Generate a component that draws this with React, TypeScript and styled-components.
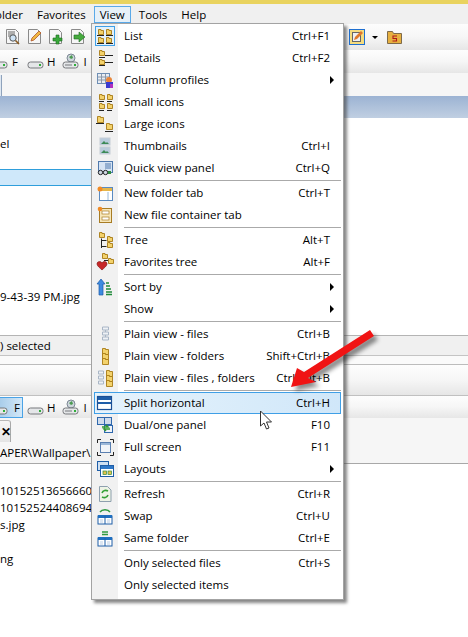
import React from 'react';
import styled, { createGlobalStyle } from 'styled-components';

const GlobalStyle = createGlobalStyle`
  html, body { margin: 0; padding: 0; background: #fff; }
  body { font-family: 'Open Sans', 'Liberation Sans', sans-serif; font-size: 11.5px; color: #000; }
`;

const Screen = styled.div`
  position: relative;
  width: 468px;
  height: 637px;
  overflow: hidden;
  background: #fff;
`;

const TitleStrip = styled.div`
  height: 4px;
  background: #e9d35f;
`;

const MenuBar = styled.div`
  height: 20px;
  background: #f0f0f0;
  display: flex;
  align-items: center;
  gap: 2px;
`;

const MenuBarItem = styled.div<{ $open?: boolean; $clipped?: boolean }>`
  height: 17px;
  line-height: 15px;
  padding: 0 5px;
  margin-left: ${(p) => (p.$clipped ? '-11px' : '0')};
  box-sizing: border-box;
  border: 1px solid ${(p) => (p.$open ? '#5aa9e8' : 'transparent')};
  background: ${(p) => (p.$open ? '#e6f0f8' : 'transparent')};
`;

const ToolBar = styled.div<{ $h: number }>`
  height: ${(p) => p.$h}px;
  box-sizing: border-box;
  background: linear-gradient(to bottom, #fdfdfd 0%, #f6f6f6 50%, #e6e6e6 100%);
  display: flex;
  align-items: center;
`;

const ToolSlot = styled.div<{ $x: number }>`
  margin-left: ${(p) => p.$x}px;
  display: flex;
  align-items: center;
  height: 16px;
`;

const DriveLetter = styled.span<{ $x: number }>`
  margin-left: ${(p) => p.$x}px;
`;

const DriveActive = styled.div`
  width: 23px;
  height: 21px;
  flex: none;
  box-sizing: border-box;
  border: 1px solid #4aa3e6;
  border-left: none;
  background: linear-gradient(to right, #a9cdea, #d3e8f8);
  display: flex;
  align-items: center;
  overflow: hidden;
  margin-right: -1px;
`;

const TabStrip = styled.div<{ $h: number }>`
  height: ${(p) => p.$h}px;
  box-sizing: border-box;
  padding-top: 2px;
  background: #f6f6f6;
`;

const UpperTab = styled.div`
  width: 2px;
  height: 21px;
  box-sizing: border-box;
  background: #dfe8f2;
  border-right: 1px solid #8fa3bc;
`;

const LowerTab = styled.div`
  width: 11px;
  height: 22px;
  box-sizing: border-box;
  background: linear-gradient(to bottom, #f7f7f7, #e4e4e4);
  border-right: 1px solid #a8a8a8;
  border-top: 1px solid #b8b8b8;
  border-top-right-radius: 3px;
  display: flex;
  align-items: center;
  font-size: 12px;
  font-weight: 700;
  padding-left: 1px;
`;

const BlueHeader = styled.div`
  height: 22px;
  background: linear-gradient(to bottom, #9cb3d3, #c0cfe2);
`;

const FileList = styled.div<{ $h: number; $top: number }>`
  height: ${(p) => p.$h}px;
  box-sizing: border-box;
  padding-top: ${(p) => p.$top}px;
  overflow: hidden;
  background: #fff;
`;

const FileRow = styled.div<{ $selected?: boolean }>`
  height: 17px;
  line-height: 17px;
  white-space: nowrap;
  box-sizing: border-box;
  ${(p) =>
    p.$selected
      ? 'background: #cfe8fa; border: 1px solid #2f9edb; border-left: none; width: 92px;'
      : ''}
`;

const StatusBar = styled.div`
  height: 20px;
  line-height: 20px;
  box-sizing: border-box;
  border-top: 1px solid #b4b4b4;
  background: #f0f0f0;
`;

const StatusGap = styled.div`
  height: 10px;
  box-sizing: border-box;
  border-top: 1px solid #c4c4c4;
  border-bottom: 1px solid #bcbcbc;
  background: #fafafa;
`;

const PathBar = styled.div`
  height: 22px;
  line-height: 22px;
  box-sizing: border-box;
  background: #f6f6f6;
  border-bottom: 1px solid #a8a8a8;
  white-space: nowrap;
  overflow: hidden;
`;

const Rule = styled.div`
  height: 1px;
  background: #c0c0c0;
`;

const Menu = styled.div`
  position: absolute;
  left: 91px;
  top: 23px;
  width: 253px;
  height: 577px;
  box-sizing: border-box;
  padding: 1px 0 3px;
  border: 1px solid #a3a3a3;
  background: linear-gradient(to right, #f1f1f1 26px, #fff 26px);
  box-shadow: 3px 3px 3px rgba(70, 70, 70, 0.65);
`;

const MenuRow = styled.div<{ $active?: boolean }>`
  height: 22px;
  margin: 0 2px;
  display: flex;
  align-items: center;
  box-sizing: border-box;
  padding: 0 11px 0 1px;
  white-space: nowrap;
  ${(p) =>
    p.$active
      ? 'background: linear-gradient(to right, #e6f3fc, #d0e7f9); outline: 1px solid #3f9fe6; outline-offset: -1px;'
      : ''}
`;

const IconBox = styled.div<{ $checked?: boolean }>`
  width: 20px;
  height: 20px;
  flex: none;
  box-sizing: border-box;
  display: flex;
  align-items: center;
  justify-content: center;
  margin-right: 9px;
  ${(p) => (p.$checked ? 'border: 1px solid #3f9fe6; background: #e2f1fb;' : '')}
`;

const MenuLabel = styled.span`
  flex: 1;
  margin-bottom: 1px;
`;

const Shortcut = styled.span`
  text-align: right;
  margin-bottom: 1px;
`;

const SubArrow = styled.span`
  width: 0;
  height: 0;
  margin-right: -4px;
  border-left: 4px solid #000;
  border-top: 4px solid transparent;
  border-bottom: 4px solid transparent;
`;

const MenuSeparator = styled.div`
  height: 3px;
  margin: 0 2px 0 32px;
  display: flex;
  align-items: center;
  &::after {
    content: '';
    flex: 1;
    height: 1px;
    background: #aaa;
  }
`;

const Overlay = styled.svg<{ $x: number; $y: number; $shadow?: boolean }>`
  position: absolute;
  left: ${(p) => p.$x}px;
  top: ${(p) => p.$y}px;
  pointer-events: none;
  ${(p) => (p.$shadow ? 'filter: drop-shadow(4px 4px 2px rgba(0, 0, 0, 0.45));' : '')}
`;

const GOLD = '#f3d26c';
const EDGE = '#a87a14';

const Fold = ({ x, y, s = 5 }: { x: number; y: number; s?: number }) => (
  <path
    d={`M${x + 0.5} ${y + 0.5}h${s / 2}v1h${s / 2}v${s - 1}h-${s}z`}
    fill={GOLD}
    stroke={EDGE}
    strokeWidth="0.9"
  />
);

const Line = ({ x, y, w, c = '#222' }: { x: number; y: number; w: number; c?: string }) => (
  <rect x={x} y={y} width={w} height="1" fill={c} />
);

const Svg = ({ children, size = 18 }: { children: React.ReactNode; size?: number }) => (
  <svg width={size} height={size} viewBox="0 0 18 18">
    {children}
  </svg>
);

const PaneTiles = () => (
  <>
    <rect x="2" y="9" width="14" height="8" fill="#fff" stroke="#1f5fa8" />
    <rect x="2" y="8" width="14" height="3" fill="#1f6fc0" />
    <rect x="8.5" y="9" width="1" height="8" fill="#1f5fa8" />
    <rect x="4" y="12" width="3" height="4" fill="#dce6f2" />
    <rect x="11" y="12" width="3" height="4" fill="#dce6f2" />
  </>
);

const icons: Record<string, React.ReactNode> = {
  list: (
    <Svg>
      <Fold x={2} y={2} />
      <Fold x={10} y={2} />
      <Fold x={2} y={10} />
      <Fold x={10} y={10} />
      <Line x={1} y={8} w={7} />
      <Line x={10} y={8} w={7} />
      <Line x={1} y={16} w={7} />
      <Line x={10} y={16} w={7} />
    </Svg>
  ),
  details: (
    <Svg>
      <Fold x={3} y={1} />
      <Fold x={3} y={10} />
      <Line x={3} y={8} w={6} />
      <Line x={9} y={6} w={8} />
      <Line x={9} y={13} w={8} />
      <Line x={3} y={16} w={6} />
    </Svg>
  ),
  columns: (
    <Svg>
      <rect x="1.5" y="2.5" width="12" height="10" fill="#e8edf4" stroke="#6f8fb4" />
      <path d="M5.5 3v9M9.5 3v9M2 6h11M2 9h11" stroke="#8b98a8" />
      <circle cx="13" cy="9" r="3" fill="#e8863a" />
      <rect x="10" y="11" width="7" height="6" fill="#3b3ad0" />
      <rect x="14" y="13" width="3" height="4" fill="#b030c0" />
    </Svg>
  ),
  small: (
    <Svg>
      <Fold x={3} y={1} />
      <Fold x={11} y={1} />
      <Line x={3} y={8} w={5} />
      <Line x={11} y={8} w={5} />
      <Fold x={3} y={10} />
      <Fold x={11} y={10} />
      <Line x={3} y={17} w={5} />
      <Line x={11} y={17} w={5} />
    </Svg>
  ),
  large: (
    <Svg>
      <Fold x={1} y={1} s={6} />
      <Line x={0} y={8} w={8} />
      <Fold x={10} y={8} s={6} />
      <Line x={9} y={16} w={8} />
    </Svg>
  ),
  thumbs: (
    <Svg>
      <rect x="4" y="1" width="10" height="7" fill="#b9cbdc" stroke="#c6ced6" />
      <path d="M5 7l3-3 2 2 1-1 2 2z" fill="#3c8a56" />
      <rect x="4" y="10" width="10" height="7" fill="#b9cbdc" stroke="#c6ced6" />
      <path d="M5 16l3-3 2 2 1-1 2 2z" fill="#3c8a56" />
    </Svg>
  ),
  quick: (
    <Svg>
      <rect x="2.5" y="2.5" width="14" height="11" fill="#d6e4f4" stroke="#4f79ad" />
      <path d="M9 5h6M9 7h6M9 9h6" stroke="#4f79ad" />
      <circle cx="4.5" cy="13.5" r="2.2" fill="#d0d8e2" stroke="#222" />
      <circle cx="9.5" cy="13.5" r="2.2" fill="#d0d8e2" stroke="#222" />
      <path d="M12 12h3v3h-3z" fill="#2f8a3c" />
    </Svg>
  ),
  newTab: (
    <Svg>
      <rect x="3.5" y="3.5" width="13" height="13" fill="#fff" stroke="#5a8ac0" />
      <rect x="4" y="4" width="12" height="3" fill="#e6b64a" />
      <path d="M12 8v8" stroke="#9ab8d8" />
      <circle cx="4" cy="5" r="2.5" fill="#f08a24" />
    </Svg>
  ),
  newFile: (
    <Svg>
      <rect x="3.5" y="2.5" width="12" height="14" fill="#f7e7ba" stroke="#a87c24" />
      <rect x="6" y="5" width="7" height="3" fill="#fff" stroke="#a87c24" strokeWidth="0.7" />
      <rect x="6" y="11" width="7" height="3" fill="#fff" stroke="#a87c24" strokeWidth="0.7" />
      <circle cx="4" cy="3" r="2.3" fill="#f08a24" />
    </Svg>
  ),
  tree: (
    <Svg>
      <Fold x={3} y={1} />
      <Fold x={11} y={5} />
      <Fold x={11} y={11} />
      <path d="M5.5 7.500v9.500M5.500 9.500h5M5.500 15.500h5" stroke="#222" fill="none" />
    </Svg>
  ),
  favTree: (
    <Svg>
      <Fold x={6} y={0} />
      <Fold x={12} y={5} />
      <path d="M8 7.500h4" stroke="#222" />
      <path d="M1 11c0-3 4-3 5-1 1-2 5-2 5 1 0 2-3 4-5 6-2-2-5-4-5-6z" fill="#c62828" stroke="#7c1010" strokeWidth="0.6" />
    </Svg>
  ),
  sort: (
    <Svg>
      <path d="M5 1l4 5H7v11H3V6H1z" fill="#3d8be0" stroke="#1d5aa8" strokeWidth="0.7" />
      <path d="M10 5h3M10 8h4M10 11h5M10 14h6M10 16.500h6" stroke="#1f8a3a" strokeWidth="1.400" />
    </Svg>
  ),
  plainFiles: (
    <Svg>
      <path d="M6.500 2h6v3h-6zM6.500 7h6v3h-6zM6.500 12h6v3h-6z" fill="#eef1f5" stroke="#a9b6c6" />
      <path d="M9.500 5v2M9.500 10v2" stroke="#a9b6c6" />
    </Svg>
  ),
  plainFolders: (
    <Svg>
      <Fold x={6} y={1} s={6} />
      <Fold x={6} y={6} s={6} />
      <Fold x={6} y={11} s={6} />
    </Svg>
  ),
  plainBoth: (
    <Svg>
      <path d="M2.500 2h5v3h-5zM2.500 7h5v3h-5zM2.500 12h5v3h-5z" fill="#eef1f5" stroke="#a9b6c6" />
      <Fold x={10} y={1} s={6} />
      <Fold x={10} y={6} s={6} />
      <Fold x={10} y={11} s={6} />
    </Svg>
  ),
  split: (
    <Svg>
      <rect x="1.500" y="2.500" width="14" height="13" fill="#fff" stroke="#1c4f94" strokeWidth="1.200" />
      <rect x="2" y="3" width="13" height="3" fill="#1f5ea8" />
      <rect x="2" y="8" width="13" height="2" fill="#1f5ea8" />
    </Svg>
  ),
  dual: (
    <Svg>
      <rect x="1.500" y="1.500" width="7" height="7" fill="#cfdcec" stroke="#2f68ad" />
      <rect x="8.500" y="1.500" width="7" height="7" fill="#cfdcec" stroke="#2f68ad" />
      <rect x="8.500" y="9.500" width="8" height="7" fill="#eef3f9" stroke="#2f68ad" />
      <path d="M6 11h6l-2-2M14 13H8l2 2" stroke="#2f9a2f" strokeWidth="1.500" fill="none" />
    </Svg>
  ),
  full: (
    <Svg>
      <rect x="4.500" y="4.500" width="10" height="10" fill="#f1f4f8" stroke="#5a7fb0" />
      <rect x="5" y="5" width="9" height="2" fill="#9cb8d8" />
      <path d="M1.500 5V1.500H5M14 1.500h3.500V5M17.500 14v3.500H14M5 17.500H1.500V14" stroke="#222" fill="none" />
    </Svg>
  ),
  layouts: (
    <Svg>
      <rect x="1.500" y="1.500" width="11" height="9" fill="#cfe0f2" stroke="#1f5ea8" />
      <rect x="4.500" y="5.500" width="13" height="11" fill="#fff" stroke="#1f5ea8" />
      <rect x="5" y="6" width="12" height="3" fill="#2f78c8" />
      <rect x="7" y="11" width="3.500" height="3.500" fill="#e6c24a" stroke="#2c8a3c" strokeWidth="0.7" />
      <rect x="12" y="11" width="3.500" height="3.500" fill="#e6c24a" stroke="#2c8a3c" strokeWidth="0.7" />
    </Svg>
  ),
  refresh: (
    <Svg>
      <path d="M3.500 1.500h8l3.500 3.500v11.500h-11.500z" fill="#eef3e6" stroke="#8ea0ae" />
      <path d="M6 8c1-3 4-3 6-2M12 10c-1 3-4 3-6 2" stroke="#35a035" strokeWidth="1.600" fill="none" />
    </Svg>
  ),
  swap: (
    <Svg>
      <PaneTiles />
      <path d="M4 5c2-3 8-3 10 0" stroke="#2f9a3f" strokeWidth="1.400" fill="none" />
    </Svg>
  ),
  same: (
    <Svg>
      <PaneTiles />
      <path d="M6 3h6M6 5.500h6" stroke="#2f9a3f" strokeWidth="1.400" />
    </Svg>
  ),
};

const DiskIcon = ({ net }: { net?: boolean }) => (
  <svg width="17" height="17" viewBox="0 0 17 17">
    {net && <circle cx="9" cy="5" r="4" fill="#cfd6dc" stroke="#7c8894" />}
    {net && <path d="M7 4l3-2 1 3-2 1z" fill="#4b9a52" />}
    <rect x="1" y="9" width="15" height="6" rx="2.500" fill="#e4e6e8" stroke="#77797c" />
    <rect x="12" y="11" width="2" height="2" fill="#2fae3a" />
    {net && <path d="M3 12h7" stroke="#77797c" />}
  </svg>
);

const ToolDoc = ({ kind }: { kind: 'search' | 'pencil' | 'plus' | 'go' }) => (
  <svg width="16" height="16" viewBox="0 0 16 16">
    <path d="M1.500 .5h9l3 3v11h-12z" fill="#f6f6f6" stroke="#8a8a8a" />
    {kind === 'search' && (
      <>
        <path d="M3 3h7M3 5h7M3 7h7" stroke="#666" />
        <circle cx="8" cy="9" r="3.200" fill="#cfe4f6" stroke="#555" />
        <path d="M10.500 11.500l3.500 3.500" stroke="#8a5a20" strokeWidth="1.600" />
      </>
    )}
    {kind === 'pencil' && <path d="M4 12l1-3 7-7 2 2-7 7z" fill="#f0b840" stroke="#b0562a" strokeWidth="0.8" />}
    {kind === 'plus' && <path d="M8 6h3v3h3v3h-3v3H8v-3H5V9h3z" fill="#38a83a" stroke="#1d6a20" strokeWidth="0.6" />}
    {kind === 'go' && <path d="M4 6h5V3l6 5-6 5v-3H4z" fill="#46aa3e" stroke="#1d6a20" strokeWidth="0.6" />}
  </svg>
);

const NoteTool = () => (
  <svg width="16" height="16" viewBox="0 0 16 16">
    <rect x=".5" y=".5" width="15" height="15" fill="#f6dc7e" stroke="#1f6fd0" />
    <rect x="3.500" y="3.500" width="8" height="9" fill="#eef0f2" stroke="#666" />
    <path d="M5 11l1-3 6-6 2 2-6 6z" fill="#e0792c" />
  </svg>
);

const Caret = styled.span`
  width: 0;
  height: 0;
  margin-left: 7px;
  border-top: 3px solid #000;
  border-left: 3px solid transparent;
  border-right: 3px solid transparent;
`;

const FolderS = () => (
  <svg width="15" height="14" viewBox="0 0 15 14">
    <path d="M.5 1.500h5l1 2h8v10h-14z" fill="#e6b040" stroke="#7e6a4a" />
    <path d="M10 6H6v2.500h3.500V11H5.500" stroke="#b01818" strokeWidth="1.100" fill="none" />
  </svg>
);

type Item =
  | { sep: true }
  | { sep?: false; icon?: string; label: string; key2?: string; sub?: boolean; checked?: boolean; active?: boolean };

const menuItems: Item[] = [
  { icon: 'list', label: 'List', key2: 'Ctrl+F1', checked: true },
  { icon: 'details', label: 'Details', key2: 'Ctrl+F2' },
  { icon: 'columns', label: 'Column profiles', sub: true },
  { icon: 'small', label: 'Small icons' },
  { icon: 'large', label: 'Large icons' },
  { icon: 'thumbs', label: 'Thumbnails', key2: 'Ctrl+I' },
  { icon: 'quick', label: 'Quick view panel', key2: 'Ctrl+Q' },
  { sep: true },
  { icon: 'newTab', label: 'New folder tab', key2: 'Ctrl+T' },
  { icon: 'newFile', label: 'New file container tab' },
  { sep: true },
  { icon: 'tree', label: 'Tree', key2: 'Alt+T' },
  { icon: 'favTree', label: 'Favorites tree', key2: 'Alt+F' },
  { sep: true },
  { icon: 'sort', label: 'Sort by', sub: true },
  { label: 'Show', sub: true },
  { sep: true },
  { icon: 'plainFiles', label: 'Plain view - files', key2: 'Ctrl+B' },
  { icon: 'plainFolders', label: 'Plain view - folders', key2: 'Shift+Ctrl+B' },
  { icon: 'plainBoth', label: 'Plain view - files , folders', key2: 'Ctrl+Alt+B' },
  { sep: true },
  { icon: 'split', label: 'Split horizontal', key2: 'Ctrl+H', active: true },
  { icon: 'dual', label: 'Dual/one panel', key2: 'F10' },
  { icon: 'full', label: 'Full screen', key2: 'F11' },
  { icon: 'layouts', label: 'Layouts', sub: true },
  { sep: true },
  { icon: 'refresh', label: 'Refresh', key2: 'Ctrl+R' },
  { icon: 'swap', label: 'Swap', key2: 'Ctrl+U' },
  { icon: 'same', label: 'Same folder', key2: 'Ctrl+E' },
  { sep: true },
  { label: 'Only selected files', key2: 'Ctrl+S' },
  { label: 'Only selected items' },
];

const upperRows = ['', 'el', '', '#', '', '', '', '', '', '', '9-43-39 PM.jpg'];
const lowerRows = ['10152513656660', '10152524408694', 's.jpg', '', 'ng'];

const App: React.FC = () => (
  <Screen>
    <GlobalStyle />
    <TitleStrip />
    <MenuBar>
      <MenuBarItem $clipped>older</MenuBarItem>
      <MenuBarItem>Favorites</MenuBarItem>
      <MenuBarItem $open>View</MenuBarItem>
      <MenuBarItem>Tools</MenuBarItem>
      <MenuBarItem>Help</MenuBarItem>
    </MenuBar>
    <ToolBar $h={26}>
      <ToolSlot $x={5}><ToolDoc kind="search" /></ToolSlot>
      <ToolSlot $x={6}><ToolDoc kind="pencil" /></ToolSlot>
      <ToolSlot $x={5}><ToolDoc kind="plus" /></ToolSlot>
      <ToolSlot $x={6}><ToolDoc kind="go" /></ToolSlot>
      <ToolSlot $x={263}><NoteTool /></ToolSlot>
      <Caret />
      <ToolSlot $x={9}><FolderS /></ToolSlot>
    </ToolBar>
    <ToolBar $h={23}>
      <ToolSlot $x={-9}><DiskIcon /></ToolSlot>
      <DriveLetter $x={4}>F</DriveLetter>
      <ToolSlot $x={9}><DiskIcon /></ToolSlot>
      <DriveLetter $x={3}>H</DriveLetter>
      <ToolSlot $x={7}><DiskIcon net /></ToolSlot>
      <DriveLetter $x={4}>I</DriveLetter>
    </ToolBar>
    <TabStrip $h={23}><UpperTab /></TabStrip>
    <BlueHeader />
    <FileList $h={217} $top={0}>
      {upperRows.map((row, i) =>
        row === '#' ? <FileRow key={i} $selected /> : <FileRow key={i}>{row || ' '}</FileRow>
      )}
    </FileList>
    <StatusBar>) selected</StatusBar>
    <StatusGap />
    <ToolBar $h={30} />
    <Rule />
    <ToolBar $h={22}>
      <DriveActive>
        <ToolSlot $x={-9}><DiskIcon /></ToolSlot>
        <DriveLetter $x={6}>F</DriveLetter>
      </DriveActive>
      <ToolSlot $x={5}><DiskIcon /></ToolSlot>
      <DriveLetter $x={3}>H</DriveLetter>
      <ToolSlot $x={7}><DiskIcon net /></ToolSlot>
      <DriveLetter $x={4}>I</DriveLetter>
    </ToolBar>
    <TabStrip $h={24}><LowerTab>✕</LowerTab></TabStrip>
    <PathBar>APER\Wallpaper\Mobile</PathBar>
    <FileList $h={174} $top={18}>
      {lowerRows.map((row, i) => (
        <FileRow key={i}>{row || ' '}</FileRow>
      ))}
    </FileList>

    <Menu>
      {menuItems.map((item, i) =>
        item.sep ? (
          <MenuSeparator key={i} />
        ) : (
          <MenuRow key={i} $active={item.active}>
            <IconBox $checked={item.checked}>{item.icon && icons[item.icon]}</IconBox>
            <MenuLabel>{item.label}</MenuLabel>
            {item.key2 && <Shortcut>{item.key2}</Shortcut>}
            {item.sub && <SubArrow />}
          </MenuRow>
        )
      )}
    </Menu>

    <Overlay $x={280} $y={325} $shadow width="110" height="80" viewBox="0 0 110 80">
      <path d="M11 62L17 43 24 47 90 5 94 11 28 53 36 57z" fill="#f01414" />
    </Overlay>
    <Overlay $x={259} $y={410} width="15" height="21" viewBox="0 0 15 21">
      <path d="M1.500 1v15l3.500-3 2.500 6 2.500-1-2.500-6h5z" fill="#fff" stroke="#333" />
    </Overlay>
  </Screen>
);

export default App;
